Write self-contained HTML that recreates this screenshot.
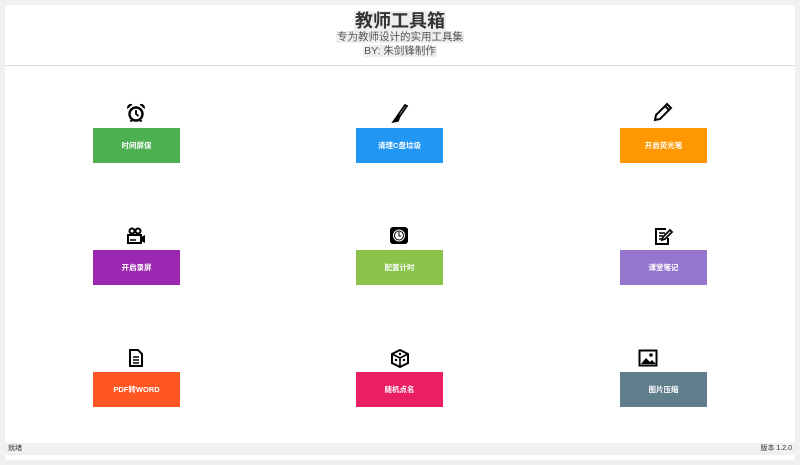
<!DOCTYPE html>
<html><head><meta charset="utf-8"><style>
*{margin:0;padding:0;box-sizing:border-box}
body{width:800px;height:465px;background:#f0f0f0;font-family:"Liberation Sans","Noto Sans CJK SC",sans-serif;position:relative;overflow:hidden}
.panel{position:absolute;left:5px;top:5px;width:790px;height:455px;background:#fff}
.hdr{position:absolute;left:5px;top:5px;width:790px;height:61px;border-bottom:1px solid #ddd;text-align:center}
.t1{position:absolute;top:5px;left:0;width:100%;font-size:18px;font-weight:bold;color:#333;line-height:22px}
.t2{position:absolute;top:26px;left:0;width:100%;font-size:10.5px;color:#555;line-height:13px}
.t3{position:absolute;top:40px;left:0;width:100%;font-size:10.5px;color:#555;line-height:13px}
.hl{background:#eee;padding:0 1px}
.btn{position:absolute;width:87px;height:35px;color:#fff;font-size:7.5px;font-weight:bold;display:flex;align-items:center;justify-content:center}
.ic{position:absolute;width:20px;height:20px}
.status{position:absolute;left:5px;top:443px;width:790px;height:12px;background:#f0f0f0;font-size:7px;color:#333;line-height:12px}
</style></head><body>
<div class="panel"></div>
<div class="hdr">
<div class="t1"><span class="hl">教师工具箱</span></div>
<div class="t2"><span class="hl">专为教师设计的实用工具集</span></div>
<div class="t3"><span class="hl">BY: 朱剑锋制作</span></div>
</div>

<svg class="ic" style="left:126px;top:103px" viewBox="0 0 20 20"><circle cx="10" cy="11" r="6.5" fill="none" stroke="#000" stroke-width="2.4"/><path d="M10 7v4l2.5 2" stroke="#000" stroke-width="1.8" fill="none"/><path d="M1.5 6a3.5 3.5 0 0 1 5-4.5zM18.5 6a3.5 3.5 0 0 0-5-4.5z" fill="#000"/><path d="M4.5 18.5l2.5-2.5M15.5 18.5l-2.5-2.5" stroke="#000" stroke-width="2.2"/></svg>
<svg class="ic" style="left:390px;top:103px" viewBox="0 0 20 20"><path d="M15 2l2 1-7 10-2-1z" fill="none" stroke="#000" stroke-width="1.8"/><path d="M8 12l2 1-2 5-5 1z" fill="#000" stroke="#000" stroke-width="1.5"/></svg>
<svg class="ic" style="left:653px;top:102px" viewBox="0 0 20 20"><path d="M14 2l4 4L7 17l-5 1 1-5z" fill="none" stroke="#000" stroke-width="2"/><path d="M12 4l4 4" stroke="#000" stroke-width="2"/></svg>
<svg class="ic" style="left:126px;top:226px" viewBox="0 0 20 20"><circle cx="6" cy="5" r="2.5" fill="none" stroke="#000" stroke-width="2"/><circle cx="12" cy="5" r="2.5" fill="none" stroke="#000" stroke-width="2"/><rect x="2" y="9" width="13" height="8" fill="none" stroke="#000" stroke-width="2"/><path d="M15 11l4-2v8l-4-2z" fill="#000"/><path d="M4 14h6" stroke="#000" stroke-width="1.5"/></svg>
<svg class="ic" style="left:389px;top:225px" viewBox="0 0 20 20"><rect x="1" y="2" width="18" height="17" rx="3" fill="#000"/><circle cx="10" cy="10.5" r="6" fill="#fff"/><circle cx="10" cy="10.5" r="4.5" fill="none" stroke="#000"/><path d="M10 7v4h2" stroke="#000" fill="none"/></svg>
<svg class="ic" style="left:653px;top:226px" viewBox="0 0 20 20"><path d="M13 3H3v15h12v-6" fill="none" stroke="#000" stroke-width="2"/><path d="M6 7h6M6 10h4M6 13h3" stroke="#000" stroke-width="1.4"/><path d="M17 4l2 2-7 7-3 1 1-3z" fill="none" stroke="#000" stroke-width="1.7"/></svg>
<svg class="ic" style="left:126px;top:348px" viewBox="0 0 20 20"><path d="M4 2h8l4 4v12H4z" fill="none" stroke="#000" stroke-width="2"/><path d="M7 9h6M7 12h6M7 15h6" stroke="#000" stroke-width="1.4"/></svg>
<svg class="ic" style="left:390px;top:348px" viewBox="0 0 20 20"><path d="M10 2l8 4v9l-8 4-8-4V6z" fill="none" stroke="#000" stroke-width="2"/><path d="M2 6l8 4 8-4M10 10v9" stroke="#000" stroke-width="1.6" fill="none"/><circle cx="10" cy="6" r="1.2" fill="#000"/><circle cx="6" cy="12" r="1.2" fill="#000"/><circle cx="14" cy="12" r="1.2" fill="#000"/></svg>
<svg class="ic" style="left:638px;top:348px" viewBox="0 0 20 20"><rect x="1.5" y="2.5" width="17" height="15" fill="none" stroke="#000" stroke-width="2"/><path d="M3 16l5-6 4 4 2-2 4 4z" fill="#000"/><circle cx="13" cy="7" r="1.8" fill="#000"/></svg>

<div class="btn" style="left:93px;top:128px;background:#4caf50">时间屏保</div>
<div class="btn" style="left:356px;top:128px;background:#2196f3">清理C盘垃圾</div>
<div class="btn" style="left:620px;top:128px;background:#ff9800">开启荧光笔</div>
<div class="btn" style="left:93px;top:250px;background:#9c27b0">开启录屏</div>
<div class="btn" style="left:356px;top:250px;background:#8bc34a">配置计时</div>
<div class="btn" style="left:620px;top:250px;background:#9575cd">课堂笔记</div>
<div class="btn" style="left:93px;top:372px;background:#ff5722">PDF转WORD</div>
<div class="btn" style="left:356px;top:372px;background:#e91e63">随机点名</div>
<div class="btn" style="left:620px;top:372px;background:#607d8b">图片压缩</div>

<div class="status"><span style="position:absolute;left:3px">就绪</span><span style="position:absolute;right:3px">版本 1.2.0</span></div>
</body></html>
